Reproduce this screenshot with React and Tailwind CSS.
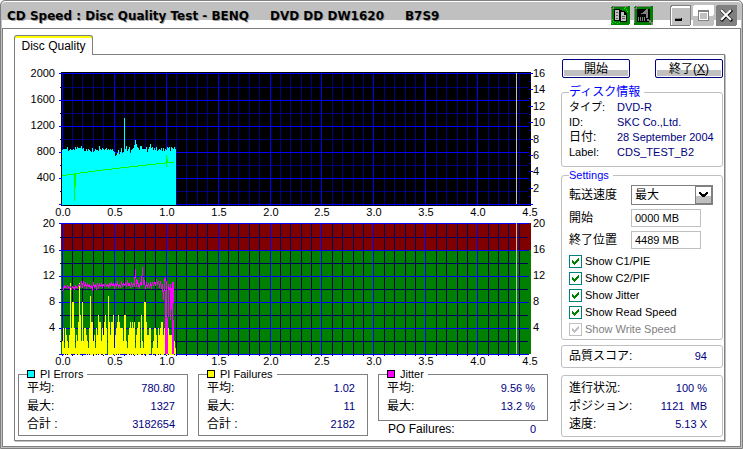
import React, { useState } from 'react';

// PI errors per sample, as the top of each bar (chart y)
const pieTops = [
  150, 149, 149, 149, 149, 147, 151, 150, 149, 150, 150, 149, 150, 147, 149, 147, 148, 148, 148,
  146, 149, 148, 151, 151, 149, 151, 149, 150, 151, 152, 148, 152, 151, 149, 150, 150, 151, 146,
  149, 150, 148, 149, 150, 149, 148, 150, 149, 150, 149, 150, 149, 151, 152, 156, 155, 153, 150,
  154, 152, 148, 153, 152, 118, 149, 146, 151, 149, 147, 153, 150, 149, 148, 145, 140, 144, 147,
  148, 150, 146, 146, 149, 149, 149, 149, 147, 152, 149, 147, 144, 148, 147, 150, 148, 150, 147,
  151, 150, 149, 150, 148, 151, 148, 151, 149, 150, 147, 148, 147, 151, 147, 148, 149, 147, 149
];

const pifValues = [
  2, 4, 1, 4, 3, 2, 1, 3, 11, 4, 8, 8, 4, 1, 3, 2, 5, 11, 6, 2, 8, 2, 4, 4, 3, 2, 1, 4, 9, 5, 5, 2, 3,
  1, 4, 3, 6, 5, 5, 2, 4, 3, 5, 6, 4, 0, 9, 5, 3, 5, 5, 6, 1, 3, 4, 5, 6, 5, 4, 4, 4, 2, 6, 6, 2, 1, 3,
  4, 5, 4, 5, 4, 5, 1, 3, 4, 5, 5, 1, 6, 2, 1, 8, 8, 5, 3, 3, 4, 4, 0, 1, 2, 4, 4, 3, 1, 4, 3, 4, 5, 5,
  3, 4, 6, 3, 3, 4, 3, 3, 3, 1, 3, 2, 1
];

const jitterTops = [
  291, 289, 286, 287, 288, 286, 287, 288, 287, 289, 287, 288, 289, 286, 287, 288, 286, 285, 287, 283,
  286, 281, 287, 284, 287, 284, 286, 285, 288, 286, 289, 284, 287, 285, 288, 283, 287, 284, 286, 284,
  287, 285, 286, 284, 286, 285, 287, 284, 286, 283, 285, 284, 287, 284, 286, 283, 287, 285, 287, 283,
  286, 284, 285, 283, 287, 282, 285, 284, 288, 282, 286, 284, 286, 269, 287, 282, 285, 289, 282, 286,
  267, 285, 282, 287, 284, 288, 283, 288, 284, 287, 282, 286, 282, 286, 279, 285, 281, 286, 283, 287,
  284, 300, 282, 277, 285, 354, 284, 290, 284, 292, 326, 282
];

const xAt = v => Math.round(61.7 + v * 103.9);

const xLines = Array.from({ length: 45 }, (_, i) => i / 10);
const xLabels = ['0.0', '0.5', '1.0', '1.5', '2.0', '2.5', '3.0', '3.5', '4.0', '4.5'];
const errorLabels = ['2000', '1600', '1200', '800', '400'];
const speedLabels = ['16', '14', '12', '10', '8', '6', '4', '2'];
const failureLabels = ['20', '16', '12', '8', '4'];

const Grid = ({ top, minor }) => {
  const rows = [0, 14, 27, 40, 53, 66, 79, 92, 105, 118, 131];
  return (
    <g shapeRendering="crispEdges">
      {xLines.map((v, i) => (
        <rect key={v} x={xAt(v)} y={top} width="1" height="133" fill={i % 5 === 0 ? '#0000ff' : minor} />
      ))}
      {rows.map((r, i) => (
        <rect key={r} x={i % 2 ? 60 : 59} y={top + r} width={i % 2 ? 468 : 470} height="1" fill={i % 2 ? minor : '#0000ff'} />
      ))}
    </g>
  );
};

const XLabels = ({ y }) => (
  <g textAnchor="middle">
    {xLabels.map((label, i) => (
      <text key={label} x={xAt(i / 2) + 1} y={y}>{label}</text>
    ))}
  </g>
);

const Charts = () => (
  <svg
    viewBox="18 64 530 303"
    className="block w-full overflow-visible"
    fontSize="11"
    role="img"
    aria-label="Disc quality charts"
  >
    {/* PI errors and read speed */}
    <rect x="61" y="72" width="470" height="134" fill="#000" shapeRendering="crispEdges" />
    <Grid top={73} minor="#000080" />
    <g shapeRendering="crispEdges">
      {pieTops.map((y, i) => (
        <rect key={i} x={62 + i} y={y} width="1" height={205 - y} fill="#00ffff" />
      ))}
      <path
        d="M62 175.5H67M67 174.5H74M74 173.5H80M80 172.5H88M88 171.5H95M95 170.5H103M103 169.5H112M112 168.5H120M120 167.5H129M129 166.5H138M138 165.5H147M147 164.5H156M156 163.5H165M165 162.5H174M74.5 173V201M75.5 173V187M166.5 155V167M167.5 159V163"
        stroke="#00ff00"
        fill="none"
      />
      <rect x="516" y="73" width="1" height="131" fill="#c0c0c0" />
      {Array.from({ length: 17 }, (_, i) => (
        <rect key={i} x={529} y={Math.round(73 + i * 8.2)} width={i % 2 ? 2 : 4} height="1" fill="#0000ff" />
      ))}
    </g>
    <g textAnchor="end">
      {errorLabels.map((label, i) => (
        <text key={label} x="55" y={77 + i * 26}>{label}</text>
      ))}
    </g>
    {speedLabels.map((label, i) => (
      <text key={label} x="533" y={Math.round(77 + i * 16.4)}>{label}</text>
    ))}
    <XLabels y={216} />

    {/* PI failures and jitter */}
    <g shapeRendering="crispEdges">
      <rect x="61" y="223" width="470" height="27" fill="#800000" />
      <rect x="61" y="250" width="470" height="104" fill="#008000" />
    </g>
    <Grid top={223} minor="#000060" />
    <g shapeRendering="crispEdges">
      {pifValues.map((v, i) => (
        <rect key={i} x={62 + i} y={Math.round(354 - v * 6.5)} width="1" height={Math.round(v * 6.5)} fill="#ffff00" />
      ))}
      <polyline
        points={jitterTops.map((y, i) => `${62.5 + i},${y}`).join(' ')}
        stroke="#ff00ff"
        fill="none"
      />
      <path d="M166.5 284V354M165.5 290V354M170.5 286V320M172.5 282V354M173.5 320V354" stroke="#ff00ff" />
      <rect x="516" y="223" width="1" height="131" fill="#c0c0c0" />
    </g>
    <g textAnchor="end">
      {failureLabels.map((label, i) => (
        <text key={label} x="55" y={227 + i * 26}>{label}</text>
      ))}
    </g>
    {failureLabels.map((label, i) => (
      <text key={label} x="533" y={227 + i * 26}>{label}</text>
    ))}
    <XLabels y={365} />
  </svg>
);

const Row = ({ label, value, className }) => (
  <div className={`flex justify-between whitespace-pre ${className}`}>
    <dt className="text-[12px]">{label}</dt>
    <dd className="text-[#000080]">{value}</dd>
  </div>
);

const StatBox = ({ title, swatch, rows, className }) => (
  <fieldset className={`border border-[#808080] pl-2 pr-3 ${className}`}>
    <legend className="flex items-center gap-[5px] pr-1 leading-[14px]">
      <span className={`size-2 border border-black ${swatch}`} />
      {title}
    </legend>
    <dl className="flex flex-col gap-[3px]">
      {rows.map(([label, value]) => (
        <Row key={label} label={label} value={value} className="leading-[15px]" />
      ))}
    </dl>
  </fieldset>
);

const Check = ({ label, disabled }) => {
  const [checked, setChecked] = useState(true);
  return (
    <label className={`flex h-[17px] items-center gap-[3px] ${disabled ? 'text-[#808080]' : ''}`}>
      <span className="relative size-[13px] shrink-0">
        <input
          type="checkbox"
          checked={checked}
          disabled={disabled}
          onChange={e => setChecked(e.target.checked)}
          className="peer block size-[13px] appearance-none border border-[#008080] bg-white disabled:border-[#c0c0c0]"
        />
        <svg
          viewBox="0 0 13 13"
          className="pointer-events-none absolute inset-0 hidden size-[13px] text-[#008000] peer-checked:block peer-disabled:text-[#c0c0c0]"
          shapeRendering="crispEdges"
        >
          <path
            d="M3 5h1v3h-1zM4 6h1v3h-1zM5 7h1v3h-1zM6 6h1v3h-1zM7 5h1v3h-1zM8 4h1v3h-1zM9 3h1v3h-1z"
            fill="currentColor"
          />
        </svg>
      </span>
      {label}
    </label>
  );
};

const TitleButton = ({ label, children }) => (
  <button type="button" aria-label={label} className="size-[21px]">
    <svg viewBox="0 0 21 21" className="block size-[21px]" shapeRendering="crispEdges">
      {children}
    </svg>
  </button>
);

const TitleBar = () => (
  <header className="flex h-[27px] items-start justify-between rounded-t-[4px] border-t border-white bg-linear-to-b from-[#c0c0c0] from-[18px] to-white to-[18px] pl-[5px] pr-1">
    <h1 className="mt-1 whitespace-pre font-[DejaVu_Sans,Noto_Sans_CJK_JP,sans-serif] text-[12px] font-bold leading-[20px] text-black [text-shadow:1px_1px_0_#a0a0a0]">
      {'CD Speed : Disc Quality Test - BENQ     DVD DD DW1620     B7S9'}
    </h1>
    <div className="mt-[3px] flex">
      <div className="mr-4 flex gap-[2px]">
        <TitleButton label="Copy">
          <rect x="1" y="1" width="19" height="19" rx="2" fill="#008000" />
          <path d="M1.5 18V3.5h2v-2H18" stroke="#808080" fill="none" />
          <path d="M4 4h6v1h2v11H4z" fill="#000" />
          <path d="M5 5h4v10H5z" fill="#c0c0c0" />
          <path d="M6 7h2v1H6zM6 10h2v1H6zM6 13h2v1H6z" fill="#606060" />
          <path d="M10 6h5v1h1v1h1v9h-7z" fill="#000" />
          <path d="M11 7h3v3h2v6h-5z" fill="#c0c0c0" />
          <path d="M12 11h3v1h-3zM12 13h3v1h-3z" fill="#606060" />
          <path
            d="M14 3h1v1h-1zM16 4h1v1h-1zM17 6h1v1h-1zM15 2h1v1h-1zM2 14h1v1H2zM3 16h1v1H3zM5 17h1v1H5zM2 18h1v1H2zM7 18h1v1H7zM9 17h1v1H9z"
            fill="#00ff00"
          />
        </TitleButton>
        <TitleButton label="Save">
          <rect x="1" y="1" width="19" height="19" rx="2" fill="#008000" />
          <path d="M1.5 18V3.5h2v-2H18" stroke="#808080" fill="none" />
          <path d="M4 4h13v13H4z" fill="#000" />
          <path d="M13 4h2v9h-2V9H8V8h2V7h1V6h1V5h1z" fill="#808080" />
          <path d="M5 12h1v4H5zM7 12h1v4H7zM9 12h1v4H9zM11 12h1v4h-1z" fill="#808080" />
          <path d="M14 14h2v1h2v2h2v3h-2v-2h-2v-2h-2z" fill="#808080" />
        </TitleButton>
      </div>
      <div className="flex gap-[2px]">
        <TitleButton label="Minimize">
          <rect x="0" y="0" width="21" height="21" rx="2" fill="#808080" />
          <rect x="1" y="1" width="19" height="19" rx="2" fill="#fff" />
          <rect x="2" y="3" width="18" height="17" rx="1" fill="#c0c0c0" />
          <rect x="5" y="13" width="7" height="3" fill="#000" />
          <rect x="5" y="13" width="6" height="1" fill="#808080" />
        </TitleButton>
        <TitleButton label="Maximize">
          <rect x="0" y="0" width="21" height="21" rx="2" fill="#c0c0c0" />
          <rect x="0" y="0" width="21" height="11" rx="2" fill="#fff" />
          <path d="M5 5h11v11H5z" fill="#808080" />
          <path d="M6 7h9v8H6z" fill="#fff" />
          <path d="M7 8h7v6H7z" fill="#c0c0c0" />
        </TitleButton>
        <TitleButton label="Close">
          <rect x="0" y="0" width="21" height="21" rx="2" fill="#808080" />
          <path d="M5 5l11 11M16 5L5 16" stroke="#000" strokeWidth="3" shapeRendering="auto" />
          <path d="M5 5l10 10M15 5L5 15" stroke="#fff" strokeWidth="2" shapeRendering="auto" />
        </TitleButton>
      </div>
    </div>
  </header>
);

const PushButton = ({ children }) => (
  <button
    type="button"
    className="h-[19px] w-[68px] rounded-[2px] border border-[#000080] bg-linear-to-b from-white from-60% to-[#c0c0c0] to-60% text-center text-[12px] leading-[16px] shadow-[inset_0_0_0_1px_#fff]"
  >
    {children}
  </button>
);

const group = 'rounded-[3px] border border-[#c0c0c0] pl-[7px]';
const textBox = 'h-[18px] w-[70px] border border-[#c0c0c0] bg-white px-[3px]';

const App = () => {
  const [speed, setSpeed] = useState('最大');
  const [start, setStart] = useState('0000 MB');
  const [end, setEnd] = useState('4489 MB');

  return (
    <div className="flex min-h-screen flex-col rounded-t-[5px] border border-[#808080] bg-[#c0c0c0] px-px pb-px font-[Liberation_Sans,Noto_Sans_CJK_JP,sans-serif] text-[11px] leading-[15px] text-black">
      <TitleBar />
      <main className="flex-1 border border-[#808080] bg-white pb-1 pl-[11px] pr-[15px] pt-[6px]">
        <div role="tablist" className="flex">
          <button
            type="button"
            role="tab"
            aria-selected="true"
            className="relative -mb-px h-5 w-[79px] rounded-t-[3px] border border-b-0 border-[#808080] bg-white text-center text-[12px] leading-[16px] shadow-[inset_0_2px_0_#ffff00]"
          >
            Disc Quality
          </button>
        </div>
        <section className="flex gap-[13px] border border-[#808080] pb-[3px] pl-[3px] pr-px shadow-[1px_1px_0_#c0c0c0]">
          <div className="flex-1 pt-[9px]">
            <Charts />
            <div className="grid grid-cols-3 items-start gap-[10px]">
              <StatBox
                title="PI Errors"
                swatch="bg-[#00ffff]"
                className="pb-[3px]"
                rows={[['平均:', '780.80'], ['最大:', '1327'], ['合計 :', '3182654']]}
              />
              <StatBox
                title="PI Failures"
                swatch="bg-[#ffff00]"
                className="pb-[3px]"
                rows={[['平均:', '1.02'], ['最大:', '11'], ['合計 :', '2182']]}
              />
              <div>
                <StatBox
                  title="Jitter"
                  swatch="bg-[#ff00ff]"
                  className="pb-[6px]"
                  rows={[['平均:', '9.56 %'], ['最大:', '13.2 %']]}
                />
                <dl>
                  <Row label="PO Failures:" value="0" className="pl-[10px] pr-3 leading-[16px]" />
                </dl>
              </div>
            </div>
          </div>

          <aside className="w-[162px] shrink-0 pt-1">
            <div className="flex justify-between pl-px">
              <PushButton>開始</PushButton>
              <PushButton>終了(<u>X</u>)</PushButton>
            </div>

            <fieldset className={`mt-[6px] pb-[6px] ${group}`}>
              <legend className="pr-1 text-[12px] leading-[16px] text-[#0000ff]">ディスク情報</legend>
              <dl className="grid grid-cols-[48px_1fr] whitespace-nowrap">
                <dt>タイプ:</dt>
                <dd className="text-[#000080]">DVD-R</dd>
                <dt>ID:</dt>
                <dd className="text-[#000080]">SKC Co.,Ltd.</dd>
                <dt className="text-[12px]">日付:</dt>
                <dd className="text-[#000080]">28 September 2004</dd>
                <dt>Label:</dt>
                <dd className="text-[#000080]">CDS_TEST_B2</dd>
              </dl>
            </fieldset>

            <fieldset className={`pb-px ${group}`}>
              <legend className="pr-1 leading-[16px] text-[#0000ff]">Settings</legend>
              <div className="grid grid-cols-[62px_1fr] items-center gap-y-1 pt-[2px]">
                <label htmlFor="speed" className="text-[12px]">転送速度</label>
                <div className="relative w-[82px]">
                  <select
                    id="speed"
                    value={speed}
                    onChange={e => setSpeed(e.target.value)}
                    className="block h-5 w-full appearance-none border border-[#808080] bg-white px-[3px] text-[12px] leading-[16px]"
                  >
                    <option>最大</option>
                  </select>
                  <svg
                    viewBox="0 0 17 18"
                    className="pointer-events-none absolute right-px top-px h-[18px] w-[17px]"
                    shapeRendering="crispEdges"
                  >
                    <path d="M0 0h17v18H0z" fill="#c0c0c0" />
                    <path d="M.5 .5h16v17H.5z" fill="none" stroke="#808080" />
                    <path d="M1 1h15v9H1z" fill="#fff" />
                    <path d="M4 6h2v1h1v1h3v-1h1v-1h2v2h-1v1h-1v1h-1v1h-3v-1h-1v-1h-1v-1h-1z" fill="#000" />
                  </svg>
                </div>
                <label htmlFor="start" className="text-[12px]">開始</label>
                <input id="start" value={start} onChange={e => setStart(e.target.value)} className={textBox} />
                <label htmlFor="end" className="text-[12px]">終了位置</label>
                <input id="end" value={end} onChange={e => setEnd(e.target.value)} className={textBox} />
              </div>
              <div className="mt-1">
                <Check label="Show C1/PIE" />
                <Check label="Show C2/PIF" />
                <Check label="Show Jitter" />
                <Check label="Show Read Speed" />
                <Check label="Show Write Speed" disabled />
              </div>
            </fieldset>

            <dl className={`mt-[5px] py-[3px] pr-[15px] ${group}`}>
              <Row label="品質スコア:" value="94" className="leading-[15px]" />
            </dl>

            <dl className={`mt-[7px] py-[3px] pr-[15px] ${group}`}>
              <Row label="進行状況:" value="100 %" className="leading-[18px]" />
              <Row label="ポジション:" value="1121  MB" className="leading-[18px]" />
              <Row label="速度:" value="5.13 X" className="leading-[18px]" />
            </dl>
          </aside>
        </section>
      </main>
    </div>
  );
};

export default App;
